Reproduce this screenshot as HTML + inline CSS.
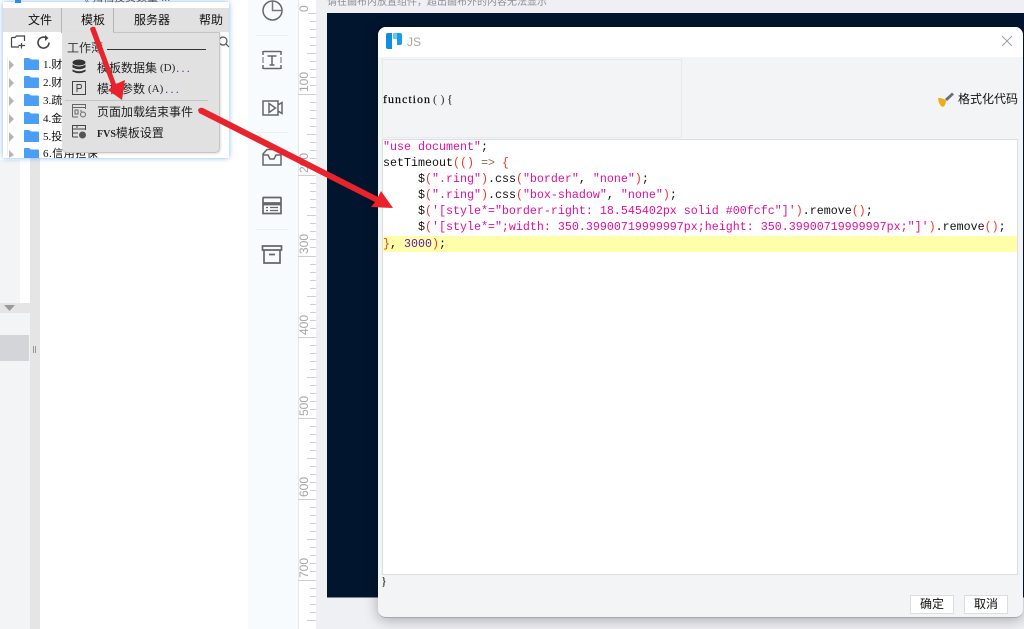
<!DOCTYPE html>
<html>
<head>
<meta charset="utf-8">
<style>
html,body{margin:0;padding:0;width:1024px;height:629px;overflow:hidden;background:#fff}
body{position:relative;font-family:"Liberation Sans","Noto Sans CJK SC",sans-serif;font-size:12px;color:#111}
.a{position:absolute}
.t{position:absolute;white-space:pre;line-height:16px}
.code{position:absolute;left:383px;white-space:pre;font-family:"Liberation Mono",monospace;font-size:11.667px;line-height:16px;height:16px;color:#111}
.s{color:#e0109a}.p{color:#f0392b}.n{color:#5a18b0}.o{color:#8a6a4a}
.btn{position:absolute;top:595px;width:42px;height:17px;background:#fff;border:1px solid #dcdde0;text-align:center;line-height:17px;font-size:12px;color:#111}
.tree{position:absolute;left:43px;white-space:pre;line-height:16px;font-family:'Liberation Serif','Noto Sans CJK SC',serif;font-size:11px}
</style>
</head>
<body>
<!-- left background -->
<div class="a" style="left:0;top:160px;width:30px;height:469px;background:#f3f4f6"></div>
<div class="a" style="left:20px;top:150px;width:10px;height:153px;background:#fff"></div>
<div class="a" style="left:0;top:303px;width:30px;height:10px;background:#e5e5e5"></div>
<svg class="a" style="left:4px;top:305px" width="12" height="7"><path d="M0 0H11L5.500 6Z" fill="#9a9a9a"/></svg>
<div class="a" style="left:0;top:335px;width:29px;height:26px;background:#d3d5d9"></div>
<div class="a" style="left:30px;top:150px;width:10px;height:479px;background:#e5e5e5"></div>
<div class="a" style="left:33px;top:346px;width:1px;height:7px;background:#999"></div>
<div class="a" style="left:35px;top:346px;width:1px;height:7px;background:#999"></div>

<!-- toolbar -->
<div class="a" style="left:248px;top:0;width:50px;height:629px;background:#f8fbfe"></div>
<div class="a" style="left:256px;top:35px;width:32px;height:1px;background:#eceef0"></div>
<div class="a" style="left:256px;top:132px;width:32px;height:1px;background:#eceef0"></div>
<div class="a" style="left:256px;top:229px;width:32px;height:1px;background:#eceef0"></div>
<svg class="a" style="left:256px;top:0" width="32" height="270" fill="none" stroke="#666" stroke-width="1.500">
<circle cx="16.500" cy="10.500" r="9.500"/>
<path d="M16.500 1V10.500H26" stroke="#777"/>
<path d="M7.500 51.500H24.500M7.500 68.500H24.500M7 51V55M25 51V55M7 65V69M25 65V69"/>
<path d="M7 57V63M25 57V63" stroke="#999"/>
<path d="M11.500 56H20.500M16 56V65M13.500 65H18.500"/>
<path d="M7 101H22V115H7ZM22 105L26 102.500V113.500L22 111" />
<path d="M13 103.500L19.500 108L13 112.500Z"/>
<path d="M7 154L11 149.500H21L25 154V165H7ZM7 155H12L14 159H18L20 155H25"/>
<path d="M7.500 197.500H24.500Q25 197.500 25 198V203H7V198ZM7 204.500H25V213.500H7Z" stroke-width="1.700"/>
<path d="M10 207.500H12M14 207.500H22M10 210.500H12M14 210.500H22" stroke-width="1.300"/>
<path d="M6.500 246H25.500V250H6.500ZM8 250V263H24V250M13 254.500H19" stroke-width="1.700"/>
</svg>

<!-- canvas bg -->
<div class="a" style="left:316px;top:0;width:708px;height:629px;background:#eff0f4"></div>
<div class="a" style="left:327px;top:-3px;white-space:pre;font-size:10px;line-height:12px;color:#8d8f94">请在画布内放置组件，超出画布外的内容无法显示</div>
<div class="a" style="left:327px;top:13px;width:697px;height:584px;background:#01152e;border-bottom:1px solid #7c8794"></div>

<!-- ruler -->
<div class="a" style="left:298px;top:0;width:18px;height:629px;background:#fff;border-left:1px solid #e6e8ec;box-sizing:border-box"></div>
<svg class="a" style="left:298px;top:0" width="18" height="629">
<g stroke="#cfcfcf" stroke-width="1">
<path d="M10 13.500H18M12 21.500H18M12 29.500H18M12 37.500H18M12 45.500H18M9 53.500H18M12 61.500H18M12 69.500H18M12 77.500H18M12 85.500H18M0 94.500H18M12 102.500H18M12 110.500H18M12 118.500H18M12 126.500H18M9 134.500H18M12 142.500H18M12 150.500H18M12 158.500H18M12 166.500H18M0 175.500H18M12 183.500H18M12 191.500H18M12 199.500H18M12 207.500H18M9 215.500H18M12 223.500H18M12 231.500H18M12 239.500H18M12 247.500H18M0 256.500H18M12 264.500H18M12 272.500H18M12 280.500H18M12 288.500H18M9 296.500H18M12 304.500H18M12 312.500H18M12 320.500H18M12 328.500H18M0 337.500H18M12 345.500H18M12 353.500H18M12 361.500H18M12 369.500H18M9 377.500H18M12 385.500H18M12 393.500H18M12 401.500H18M12 409.500H18M0 418.500H18M12 426.500H18M12 434.500H18M12 442.500H18M12 450.500H18M9 458.500H18M12 466.500H18M12 474.500H18M12 482.500H18M12 490.500H18M0 499.500H18M12 507.500H18M12 515.500H18M12 523.500H18M12 531.500H18M9 539.500H18M12 547.500H18M12 555.500H18M12 563.500H18M12 571.500H18M0 580.500H18M12 588.500H18M12 596.500H18M12 604.500H18M12 612.500H18M9 620.500H18"/>
</g>
<g fill="#a6a6a6" font-family="Liberation Sans" font-size="12">
<text transform="translate(10,12) rotate(-90)">0</text>
<text transform="translate(10,92) rotate(-90)">100</text>
<text transform="translate(10,173) rotate(-90)">200</text>
<text transform="translate(10,254) rotate(-90)">300</text>
<text transform="translate(10,335) rotate(-90)">400</text>
<text transform="translate(10,416) rotate(-90)">500</text>
<text transform="translate(10,497) rotate(-90)">600</text>
<text transform="translate(10,578) rotate(-90)">700</text>
</g>
</svg>

<!-- dialog -->
<div class="a" style="left:378px;top:27px;width:645px;height:591px;background:#f3f4f6;border-radius:8px;box-shadow:0 2px 14px rgba(0,0,0,.3);border-bottom:1px solid #a8a8a8;box-sizing:border-box;overflow:hidden">
<div class="a" style="left:0;top:0;width:645px;height:30px;background:#fff"></div>
</div>
<svg class="a" style="left:386px;top:33px" width="16" height="16">
<path d="M0 2Q0 0 2 0H6V16H2Q0 16 0 14Z" fill="#0f8ee0"/>
<path d="M7 0H11V6H7Z" fill="#6cc6f2"/>
<path d="M11 0H14Q16 0 16 2V10Q16 12 14 12H11Z" fill="#1a9be8"/>
</svg>
<div class="t" style="left:407px;top:34px;font-size:12px;color:#a5a5a5">JS</div>
<svg class="a" style="left:1001px;top:35px" width="12" height="12"><path d="M1 1L11 11M11 1L1 11" stroke="#a0a0a0" stroke-width="1"/></svg>

<div class="a" style="left:382px;top:59px;width:300px;height:79px;border:1px solid #e9e9ec;box-sizing:border-box"></div>
<div class="t" style="left:383px;top:91px;font-family:'Liberation Serif',serif;font-size:12px;letter-spacing:1px;color:#000;-webkit-text-stroke:.15px #000">function</div>
<div class="t" style="left:433px;top:91px;font-family:'Liberation Serif',serif;font-size:12px;letter-spacing:3.500px;color:#333">()</div>
<div class="t" style="left:447px;top:91px;font-family:'Liberation Serif',serif;font-size:12px;color:#111">{</div>

<svg class="a" style="left:937px;top:91px" width="18" height="17">
<path d="M1 7Q6 7 9 9.500Q9 14 6 16Q2 15 1 7Z" fill="#f2ab17"/>
<path d="M8 8L15 1.500L17 3.500L10 10Z" fill="#6a6d78"/>
</svg>
<div class="t" style="left:958px;top:91px;font-size:12px;color:#111">格式化代码</div>

<div class="a" style="left:382px;top:139px;width:636px;height:436px;background:#fff;border:1px solid #dcdde0;box-sizing:border-box"></div>
<div class="a" style="left:383px;top:236px;width:634px;height:16px;background:#ffffaa"></div>

<div class="code" style="top:138.500px"><span class="s">"use document"</span>;</div>
<div class="code" style="top:154.500px">setTimeout<span class="p">((</span><span class="p">)</span> <span class="o">=&gt;</span> <span class="p">{</span></div>
<div class="code" style="top:170.500px">     $<span class="p">(</span><span class="s">".ring"</span><span class="p">)</span>.css<span class="p">(</span><span class="s">"border"</span>, <span class="s">"none"</span><span class="p">)</span>;</div>
<div class="code" style="top:186.500px">     $<span class="p">(</span><span class="s">".ring"</span><span class="p">)</span>.css<span class="p">(</span><span class="s">"box-shadow"</span>, <span class="s">"none"</span><span class="p">)</span>;</div>
<div class="code" style="top:202.500px">     $<span class="p">(</span><span class="s">'[style*="border-right: 18.545402px solid #00fcfc"]'</span><span class="p">)</span>.remove<span class="p">()</span>;</div>
<div class="code" style="top:218.500px">     $<span class="p">(</span><span class="s">'[style*=";width: 350.39900719999997px;height: 350.39900719999997px;"]'</span><span class="p">)</span>.remove<span class="p">()</span>;</div>
<div class="code" style="top:235.500px"><span class="p">}</span>, <span class="n">3000</span><span class="p">)</span>;</div>

<div class="t" style="left:381px;top:573px;font-family:'Liberation Serif',serif;font-size:12px;color:#111">}</div>
<div class="btn" style="left:910px">确定</div>
<div class="btn" style="left:964px">取消</div>

<!-- popup window -->
<div class="a" style="left:3px;top:2px;width:226px;height:156px;background:#fff;box-shadow:0 0 5px rgba(90,160,240,.75)"></div>
<div class="a" style="left:15px;top:-1px;width:6px;height:4px;background:#2a8fe0"></div>
<div class="a" style="left:78px;top:-8px;white-space:pre;font-size:11px;line-height:12px;color:#555">《 归档投资数量 ...</div>
<div class="a" style="left:3px;top:3px;width:226px;height:5px;background:#fff"></div>
<div class="a" style="left:3px;top:8px;width:226px;height:24px;background:#e1e1e1"></div>
<div class="a" style="left:61px;top:8px;width:53px;height:25px;background:#e1e1e1;border-left:1px solid #b4b4b4;border-right:1px solid #b4b4b4;box-sizing:border-box"></div>
<div class="t" style="left:28px;top:12px;font-size:12px">文件</div>
<div class="t" style="left:81px;top:12px;font-size:12px">模板</div>
<div class="t" style="left:134px;top:12px;font-size:12px">服务器</div>
<div class="t" style="left:199px;top:12px;font-size:12px">帮助</div>

<svg class="a" style="left:10px;top:34px" width="40" height="16" fill="none" stroke="#444" stroke-width="1.200">
<path d="M1.500 3.500H5L6.500 2H14.500V7M1.500 3.500V13H9M11.500 9V14.500M8.500 11.500H15"/>
<path d="M39 8.500A5.500 5.500 0 1 1 36.500 4" stroke-width="1.600"/>
<path d="M35 1L38.500 4L35 7Z" fill="#444" stroke="none"/>
</svg>
<svg class="a" style="left:218px;top:35px" width="12" height="14" fill="none" stroke="#555" stroke-width="1.200"><circle cx="5" cy="6" r="4"/><path d="M8 9L11 12"/></svg>

<div class="a" style="left:7px;top:57px;width:1px;height:98px;background:#eee"></div>
<svg class="a" style="left:9px;top:60px" width="10" height="98" fill="#b5b5b5">
<path d="M0 0L5 5L0 10Z"/><path d="M0 18L5 23L0 28Z"/><path d="M0 36L5 41L0 46Z"/><path d="M0 54L5 59L0 64Z"/><path d="M0 72L5 77L0 82Z"/><path d="M0 90L5 95L0 98Z"/>
</svg>
<svg class="a" style="left:24px;top:57px" width="15" height="101" fill="#4a9ff5">
<path d="M0 2Q0 1 1 1H5L7 2.500H14Q15 2.500 15 4V13H0Z"/>
<path d="M0 20Q0 19 1 19H5L7 20.500H14Q15 20.500 15 22V31H0Z"/>
<path d="M0 38Q0 37 1 37H5L7 38.500H14Q15 38.500 15 40V49H0Z"/>
<path d="M0 56Q0 55 1 55H5L7 56.500H14Q15 56.500 15 58V67H0Z"/>
<path d="M0 74Q0 73 1 73H5L7 74.500H14Q15 74.500 15 76V85H0Z"/>
<path d="M0 92Q0 91 1 91H5L7 92.500H14Q15 92.500 15 94V101H0Z"/>
</svg>
<div class="tree" style="top:57px">1.财</div>
<div class="tree" style="top:75px">2.财</div>
<div class="tree" style="top:93px">3.疏</div>
<div class="tree" style="top:111px">4.金</div>
<div class="tree" style="top:129px">5.投</div>
<div class="tree" style="top:147px;height:11px;overflow:hidden;line-height:14px;letter-spacing:.5px">6.信用担保</div>

<!-- dropdown -->
<div class="a" style="left:62px;top:32px;width:158px;height:121px;background:#e1e1e1;border-right:1px solid #c6c6c6;border-bottom:1px solid #c6c6c6;border-radius:0 0 5px 5px;box-sizing:border-box;box-shadow:1px 1px 2px rgba(0,0,0,.12)"></div>
<div class="a" style="left:113px;top:32px;width:107px;height:1px;background:#c4c4c4"></div>
<div class="t" style="left:67px;top:40px;font-size:12px;color:#333">工作薄</div>
<div class="a" style="left:107px;top:49px;width:99px;height:1px;background:#333"></div>
<svg class="a" style="left:70px;top:59px" width="18" height="84" fill="none">
<ellipse cx="9" cy="3.500" rx="6.500" ry="3" fill="#333"/>
<path d="M2.500 5.500Q9 9.500 15.500 5.500V8.500Q9 12 2.500 8.500ZM2.500 10.500Q9 14 15.500 10.500V12.500Q9 16 2.500 12.500Z" fill="#333"/>
<rect x="2.500" y="22.500" width="13" height="13" stroke="#444"/>
<path d="M7 33V25.500H10Q11.500 25.500 11.500 27.500Q11.500 29.500 10 29.500H7" stroke="#444"/>
<path d="M2.500 58V45.500H15.500V50M2.500 48.500H15.500M2.500 58H8" stroke="#666"/>
<path d="M5 51H8V55H5ZM10 52H12" stroke="#666"/>
<circle cx="13" cy="55.500" r="2.500" stroke="#666"/>
<path d="M2.500 78V66.500H15.500V71M2.500 70H15.500M6 68H8M2.500 78H8M2.500 74H8" stroke="#444"/>
<circle cx="12.500" cy="76" r="3.500" fill="#555"/>
</svg>
<div class="t" style="left:97px;top:60px;font-size:12px;color:#222">模板数据集</div>
<div class="t" style="left:160px;top:60px;font-family:'Liberation Serif',serif;font-size:11px;color:#222">(D)</div>
<div class="t" style="left:176px;top:60px;font-size:12px;letter-spacing:2px;color:#6a2a9a">...</div>
<div class="t" style="left:97px;top:81px;font-size:12px;color:#222">模板参数</div>
<div class="t" style="left:148px;top:81px;font-family:'Liberation Serif',serif;font-size:11px;color:#222">(A)</div>
<div class="t" style="left:165px;top:81px;font-size:12px;letter-spacing:2px;color:#6a2a9a">...</div>
<div class="a" style="left:65px;top:100px;width:143px;height:1px;background:#c4c4c4"></div>
<div class="t" style="left:97px;top:104px;font-size:12px;color:#222">页面加载结束事件</div>
<div class="t" style="left:97px;top:125px;font-size:12px;color:#222"><span style="font-family:'Liberation Serif',serif;font-size:10px;font-weight:bold">FVS</span>模板设置</div>

<!-- red arrows -->
<svg class="a" style="left:0;top:0" width="1024" height="629">
<path d="M90 29Q91 26 95 27L116 84L125 80L122 100L108 90L112 87Z" fill="#e8232b"/>
<path d="M198 110Q199 107 203 108L378 197L381 191L393 208L371 207L375 202L199 113Z" fill="#e8232b"/>
</svg>
</body>
</html>
